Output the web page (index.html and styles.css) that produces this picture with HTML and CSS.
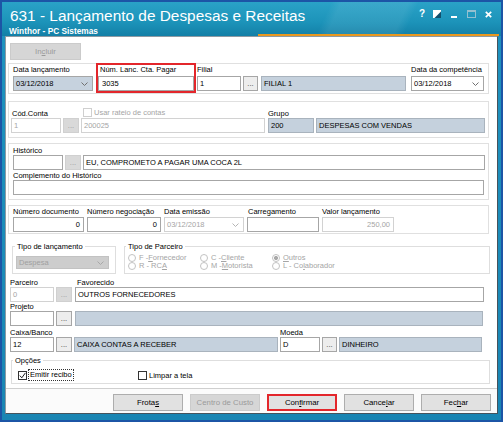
FILE: index.html
```html
<!DOCTYPE html>
<html lang="pt-BR">
<head>
<meta charset="utf-8">
<title>631 - Lançamento de Despesas e Receitas</title>
<link rel="stylesheet" href="styles.css">
</head>
<body>
<div class="window">
  <div class="titlebar">
    <div class="tt">
      <div class="title">631 - Lançamento de Despesas e Receitas</div>
      <div class="subtitle">Winthor - PC Sistemas</div>
    </div>
    <div class="tbicons">
      <span class="ic-help">?</span>
      <svg class="ic-restore" width="8" height="8" viewBox="0 0 8 8"><rect x="0" y="0" width="8" height="8" fill="#fff"/><path d="M8 1.5 V8 H1.5 Z" fill="#10506e"/></svg>
      <svg class="ic-min" width="6" height="8" viewBox="0 0 6 8"><rect x="0" y="6" width="6" height="2" fill="#fff"/></svg>
      <svg class="ic-max" width="9" height="8" viewBox="0 0 9 8"><rect x="0.5" y="0.5" width="8" height="7" fill="none" stroke="#93c0d0"/><rect x="0" y="0" width="9" height="2" fill="#93c0d0"/></svg>
      <svg class="ic-close" width="7" height="7" viewBox="0 0 7 7"><path d="M0.8 0.8 L6.2 6.2 M6.2 0.8 L0.8 6.2" stroke="#fff" stroke-width="1.7"/></svg>
    </div>
  </div>

  <div class="client">
    <div class="toolbar"><div class="btn off incluir">In<u>c</u>luir</div></div>

    <div class="panel p1">
      <div class="fld f-dtlanc">
        <div class="lbl">Data lançamento</div>
        <div class="in cb sel"><span>03/12/2018</span><svg class="chev" viewBox="0 0 7 4"><path d="M0.5 0.5 L3.5 3.5 L6.5 0.5" fill="none" stroke="#707070"/></svg></div>
      </div>
      <div class="fld f-numlanc">
        <div class="lbl">Núm. Lanc. Cta. Pagar</div>
        <div class="in">3035</div>
      </div>
      <div class="fld f-filial">
        <div class="lbl">Filial</div>
        <div class="row">
          <div class="in w-filcod">1</div>
          <div class="dots">...</div>
          <div class="in ro w-filnome">FILIAL 1</div>
        </div>
      </div>
      <div class="fld f-dtcomp">
        <div class="lbl">Data da competência</div>
        <div class="in cb"><span>03/12/2018</span><svg class="chev" viewBox="0 0 7 4"><path d="M0.5 0.5 L3.5 3.5 L6.5 0.5" fill="none" stroke="#707070"/></svg></div>
      </div>
    </div>

    <div class="panel p2">
      <div class="fld f-codconta">
        <div class="lbl">Cód.Conta</div>
        <div class="in dis">1</div>
      </div>
      <div class="fld f-ccbtn">
        <div class="lbl"></div>
        <div class="dots dis">...</div>
      </div>
      <div class="fld f-ccdesc">
        <div class="chk-lbl"><span class="chk dis"></span><span class="dis-t">Usar rateio de contas</span></div>
        <div class="in dis">200025</div>
      </div>
      <div class="fld f-grupo">
        <div class="lbl">Grupo</div>
        <div class="row">
          <div class="in ro w-grpcod">200</div>
          <div class="in ro w-grpnome">DESPESAS COM VENDAS</div>
        </div>
      </div>
    </div>

    <div class="panel p3">
      <div class="lbl">Histórico</div>
      <div class="row">
        <div class="in w-histcod"></div>
        <div class="dots dis">...</div>
        <div class="in w-histtxt">EU, COMPROMETO A PAGAR UMA COCA 2L</div>
      </div>
      <div class="lbl lbl2">Complemento do Histórico</div>
      <div class="in w-compl"></div>
    </div>

    <div class="panel p4">
      <div class="fld f-nd">
        <div class="lbl">Número documento</div>
        <div class="in num">0</div>
      </div>
      <div class="fld f-nn">
        <div class="lbl">Número negociação</div>
        <div class="in num">0</div>
      </div>
      <div class="fld f-de">
        <div class="lbl">Data emissão</div>
        <div class="in cb dis"><span>03/12/2018</span><svg class="chev" viewBox="0 0 7 4"><path d="M0.5 0.5 L3.5 3.5 L6.5 0.5" fill="none" stroke="#b5b5b5"/></svg></div>
      </div>
      <div class="fld f-car">
        <div class="lbl">Carregamento</div>
        <div class="in"></div>
      </div>
      <div class="fld f-val">
        <div class="lbl">Valor lançamento</div>
        <div class="in num dis">250,00</div>
      </div>
    </div>

    <div class="grp-row">
      <fieldset class="fs fs-tipo">
        <legend>Tipo de lançamento</legend>
        <div class="in cb combo-off"><span>Despesa</span><svg class="chev" viewBox="0 0 7 4"><path d="M0.5 0.5 L3.5 3.5 L6.5 0.5" fill="none" stroke="#a8a8a8"/></svg></div>
      </fieldset>
      <fieldset class="fs fs-parc">
        <legend>Tipo de Parceiro</legend>
        <div class="radios">
          <div class="rd"><i></i>F - <u>F</u>ornecedor</div>
          <div class="rd"><i></i>C - <u>C</u>liente</div>
          <div class="rd"><i class="on"></i><u>O</u>utros</div>
          <div class="rd"><i></i>R - RC<u>A</u></div>
          <div class="rd"><i></i>M - <u>M</u>otorista</div>
          <div class="rd"><i></i>L - Co<u>l</u>aborador</div>
        </div>
      </fieldset>
    </div>

    <div class="lrow lrow-parc">
      <div class="fld f-pcod">
        <div class="lbl">Parceiro</div>
        <div class="in dis">0</div>
      </div>
      <div class="fld f-btn">
        <div class="lbl"></div>
        <div class="dots dis">...</div>
      </div>
      <div class="fld f-fav">
        <div class="lbl">Favorecido</div>
        <div class="in">OUTROS FORNECEDORES</div>
      </div>
    </div>

    <div class="lrow">
      <div class="fld f-pcod">
        <div class="lbl">Projeto</div>
        <div class="in"></div>
      </div>
      <div class="fld f-btn">
        <div class="lbl"></div>
        <div class="dots">...</div>
      </div>
      <div class="fld f-proj">
        <div class="lbl"></div>
        <div class="in ro"></div>
      </div>
    </div>

    <div class="lrow lrow-cx">
      <div class="fld f-pcod">
        <div class="lbl">Caixa/Banco</div>
        <div class="in">12</div>
      </div>
      <div class="fld f-btn">
        <div class="lbl"></div>
        <div class="dots">...</div>
      </div>
      <div class="fld f-cxnome">
        <div class="lbl"></div>
        <div class="in ro">CAIXA CONTAS A RECEBER</div>
      </div>
      <div class="fld f-moeda">
        <div class="lbl">Moeda</div>
        <div class="row">
          <div class="in w-moecod">D</div>
          <div class="dots">...</div>
          <div class="in ro w-moenome">DINHEIRO</div>
        </div>
      </div>
    </div>

    <fieldset class="fs fs-opc">
      <legend>Opções</legend>
      <div class="opc">
        <div class="ck ck-emit">
          <span class="chk"><svg width="7" height="7" viewBox="0 0 7 7"><path d="M0.8 3.6 L2.8 5.8 L6.4 0.9" fill="none" stroke="#1e1e1e"/></svg></span>
          <span class="focus">Emitir recibo</span>
        </div>
        <div class="ck">
          <span class="chk"></span>
          <span class="ck-t">Limpar a tela</span>
        </div>
      </div>
    </fieldset>

    <div class="footer">
      <div class="btn">Frota<u>s</u></div>
      <div class="btn off">Centro de Custo</div>
      <div class="btn hl">Con<u>f</u>irmar</div>
      <div class="btn">Cance<u>l</u>ar</div>
      <div class="btn">Fec<u>h</u>ar</div>
    </div>
  </div>
</div>
</body>
</html>
```

FILE: styles.css
```css
* { box-sizing: border-box; }
html, body { margin: 0; padding: 0; }
body {
  width: 503px;
  height: 422px;
  overflow: hidden;
  font-family: "Liberation Sans", Arial, sans-serif;
  font-size: 7.5px;
  color: #000;
  background: #1b8cb8;
}
u { text-decoration: underline; }

.window {
  width: 503px;
  height: 422px;
  display: flex;
  flex-direction: column;
  border: 2px solid #1c55a6;
  background: linear-gradient(180deg, #1f93bf 0%, #1985b3 100%);
}

/* title bar */
.titlebar {
  height: 34px;
  flex: none;
  display: flex;
  justify-content: space-between;
  color: #fff;
  background:
    linear-gradient(#e9981f, #e9981f) right 2px bottom 0 / 241px 2px no-repeat,
    linear-gradient(115deg, rgba(255,255,255,0) 64%, rgba(255,255,255,.08) 66%, rgba(255,255,255,.08) 79%, rgba(255,255,255,0) 81%),
    linear-gradient(180deg, #2aa2c7 0%, #1c93b9 60%, #137fa6 100%);
}
.tt { padding: 5px 0 0 8px; }
.title { font-size: 15.4px; line-height: 18px; white-space: nowrap; }
.subtitle { font-weight: bold; font-size: 8.3px; line-height: 10px; margin: 1px 0 0 -1px; white-space: nowrap; }
.tbicons {
  display: flex;
  align-items: center;
  height: 8px;
  margin-top: 8px;
  padding-right: 9px;
}
.ic-help { width: 6px; font-weight: bold; font-size: 10px; line-height: 8px; text-align: center; }
.ic-restore { margin-left: 8px; }
.ic-min { margin-left: 10px; }
.ic-max { margin-left: 10px; }
.ic-close { margin-left: 9px; }

/* client area */
.client {
  flex: 1;
  margin: 0 3px 6px;
  background: #fff;
  border: 1px solid;
  border-color: #8d9aa3 #45535d #45535d #8d9aa3;
  display: flex;
  flex-direction: column;
}
.toolbar { height: 26px; padding: 6px 0 0 4px; flex: none; }

.btn {
  width: 70px;
  height: 17px;
  border: 1px solid #adadad;
  background: #e1e1e1;
  text-align: center;
  line-height: 15px;
  font-size: 7.8px;
  color: #000;
  white-space: nowrap;
  flex: none;
}
.btn.off { background: #d6d6d6; border-color: #cbcbcb; color: #9a9a9a; }
.btn.hl { border: 2px solid #e3262b; line-height: 13px; }
.incluir { width: 71px; background: #cccccc; border-color: #c2c2c2; color: #8a8a8a; }

/* panels */
.panel {
  margin-left: 2px;
  width: 481px;
  border: 1px solid #e0e0e0;
  display: flex;
  align-items: flex-start;
  flex: none;
}
.p1 { padding: 1px 0 2px; }
.p2 { padding: 7px 0 4px; margin-top: 7px; }
.p3 { padding: 2px 0 4px 4px; margin-top: 5px; flex-direction: column; }
.p4 { padding: 1px 0 1px; margin-top: 5px; }

.fld { display: flex; flex-direction: column; flex: none; }
.row { display: flex; }
.lbl { height: 9px; line-height: 9px; white-space: nowrap; color: #000; }
.p1 .lbl { margin-bottom: 2px; }
.p4 .lbl { margin-bottom: 1px; }
.lbl2 { margin-top: 1px; }

.in {
  height: 15px;
  border: 1px solid #a6a6a6;
  background: #fff;
  line-height: 13px;
  padding: 0 2px;
  white-space: nowrap;
  overflow: hidden;
  flex: none;
  color: #000;
}
.in.ro { background: #c5d1dd; border-color: #a9b3bd; }
.in.dis { border-color: #d2d2d2; color: #a5a5a5; }
.in.num { text-align: right; padding-right: 3px; }
.cb { display: flex; align-items: center; justify-content: space-between; padding-right: 4px; }
.cb.sel { background: #c6d2de; }
.chev { width: 7px; height: 4px; flex: none; }

.dots {
  width: 16px;
  height: 15px;
  border: 1px solid #a6a6a6;
  background: #ededed;
  text-align: center;
  line-height: 13px;
  flex: none;
  color: #333;
}
.dots.dis { background: #d9d9d9; border-color: #d0d0d0; color: #9a9a9a; }

.chk { width: 9px; height: 9px; border: 1px solid #333; background: #fff; flex: none; display: flex; align-items: center; justify-content: center; }
.chk.dis { border-color: #cfcfcf; }
.chk-lbl { display: flex; align-items: center; height: 11px; margin-top: -2px; padding-left: 2px; white-space: nowrap; }
.dis-t { margin-left: 2px; color: #a5a5a5; }

/* panel 1 */
.f-dtlanc { margin-left: 4px; width: 80px; }
.f-numlanc { margin-left: 5px; width: 96px; outline: 2px solid #e3262b; }
.f-numlanc .lbl { padding-left: 2px; }
.f-numlanc .in { padding-left: 3px; }
.f-filial { margin-left: 3px; }
.w-filcod { width: 44px; }
.f-filial .dots { margin-left: 2px; width: 15px; }
.w-filnome { margin-left: 3px; width: 145px; }
.f-dtcomp { margin-left: 5px; width: 73px; }

/* panel 2 */
.f-codconta { margin-left: 2px; width: 50px; }
.f-codconta .lbl { padding-left: 1px; }
.f-ccbtn { margin-left: 2px; width: 16px; }
.f-ccdesc { margin-left: 2px; width: 184px; }
.f-grupo { margin-left: 3px; }
.w-grpcod { width: 46px; }
.w-grpnome { margin-left: 2px; width: 169px; }

/* panel 3 */
.w-histcod { width: 50px; }
.p3 .dots { margin-left: 2px; width: 16px; }
.w-histtxt { margin-left: 2px; width: 402px; }
.w-compl { width: 471px; }

/* panel 4 */
.f-nd { margin-left: 4px; width: 71px; }
.f-nn { margin-left: 3px; width: 74px; }
.f-de { margin-left: 3px; width: 80px; }
.f-car { margin-left: 3px; width: 72px; }
.f-car .lbl { padding-left: 1px; }
.f-val { margin-left: 3px; width: 72px; }

/* group boxes */
.grp-row { display: flex; margin-top: 8px; flex: none; align-items: stretch; }
.fs { margin: 0; border: 1px solid #dedede; min-width: 0; }
.fs legend { padding: 0 2px; line-height: 9px; height: 9px; font-size: 7.5px; color: #000; white-space: nowrap; }
.fs-tipo { margin-left: 6px; width: 104px; padding: 5px 0 4px 2px; }
.fs-parc { margin-left: 8px; width: 366px; padding: 3px 0 3px 1px; }
.combo-off { margin-left: 1px; width: 93px; height: 13px; line-height: 11px; background: #cdcdcd; border-color: #c2c2c2; color: #a0a0a0; }

.radios { display: grid; grid-template-columns: 72px 72px 100px; grid-auto-rows: 8px; padding-left: 2px; }
.rd { display: flex; align-items: center; color: #a5a5a5; line-height: 8px; white-space: nowrap; }
.rd i { width: 8px; height: 8px; border: 1px solid #c3c3c3; border-radius: 50%; margin-right: 3px; flex: none; background: #fff; }
.rd i.on { background: radial-gradient(circle, #a9a9a9 0 1.8px, #fff 2.3px); }

/* lower rows */
.lrow { display: flex; flex: none; }
.lrow-parc { margin-top: 4px; }
.lrow-cx { margin-top: 2px; }
.f-pcod { margin-left: 4px; width: 44px; }
.f-btn { margin-left: 2px; width: 16px; }
.f-fav { margin-left: 3px; width: 409px; }
.f-fav .lbl { padding-left: 2px; }
.f-proj { margin-left: 3px; width: 408px; }
.f-cxnome { margin-left: 2px; width: 204px; }
.f-moeda { margin-left: 2px; }
.w-moecod { width: 40px; }
.f-moeda .dots { margin-left: 2px; width: 15px; }
.w-moenome { margin-left: 2px; width: 143px; }

/* options */
.fs-opc { margin: 4px 0 0 5px; width: 479px; padding: 4px 0 2px 1px; flex: none; }
.opc { display: flex; height: 12px; align-items: center; padding-left: 5px; }
.ck { display: flex; align-items: center; white-space: nowrap; }
.ck-emit { width: 120px; }
.focus { margin-left: 1px; padding: 0 1px; border: 1px dotted #333; line-height: 10px; }
.ck-t { margin-left: 2px; }

/* footer */
.footer {
  margin-top: 4px;
  border-top: 1px solid #cfcfcf;
  padding: 5px 6px 2px 0;
  display: flex;
  justify-content: flex-end;
  gap: 7px;
  flex: none;
  background: #fbfbfb;
}
```
